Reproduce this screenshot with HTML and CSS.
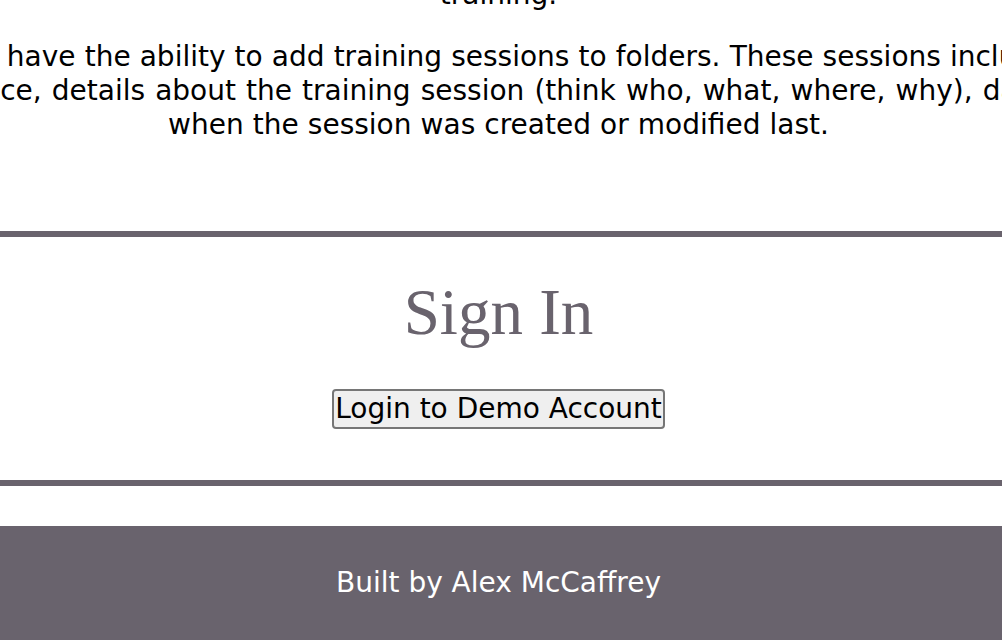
FILE: index.html
```html
<!DOCTYPE html>
<html lang="en">
<head>
<meta charset="utf-8">
<title>Training Log</title>
<link rel="stylesheet" href="styles.css">
</head>
<body>
  <section class="about">
    <p class="about-text">This app was designed to help users keep a log of their<br>training.</p>
    <p class="about-text">Users have the ability to add training sessions to folders. These sessions include a<br><span class="about-wide">distance, details about the training session (think who, what, where, why), date of</span><br>when the session was created or modified last.</p>
  </section>
  <hr class="rule">
  <section class="signin">
    <h2 class="signin-title">Sign In</h2>
    <button class="demo-btn" type="button">Login to Demo Account</button>
  </section>
  <hr class="rule">
  <footer class="footer">Built by Alex McCaffrey</footer>
</body>
</html>
```
FILE: styles.css
```css
html, body {
  margin: 0;
  padding: 0;
}

body {
  font-family: "DejaVu Sans", Verdana, sans-serif;
  font-size: 28px;
  line-height: 34px;
  color: #000;
  background: #fff;
}

.about {
  display: flex;
  flex-direction: column;
  align-items: center;
  gap: 28px;
  margin-top: -56px;
  padding: 0 5px 89px 0;
  overflow-x: clip;
}

.about-text {
  margin: 0;
  width: max-content;
  text-align: center;
  word-spacing: 0.2px;
}

.about-wide {
  word-spacing: 1.2px;
}

.rule {
  margin: 0;
  height: 0;
  border: 0;
  border-top: 6px solid #69636d;
}

.signin {
  display: flex;
  flex-direction: column;
  align-items: center;
  padding: 38px 5px 51px 0;
}

.signin-title {
  margin: 0 0 40px;
  font-family: "Liberation Serif", Georgia, serif;
  font-size: 65px;
  line-height: 74px;
  font-weight: normal;
  color: #69636d;
}

.demo-btn {
  font: inherit;
  line-height: 34px;
  color: #000;
  background: #efefef;
  border: 2px solid #767676;
  border-radius: 4px;
  padding: 1px 1px;
  margin: 0;
}

.footer {
  margin-top: 40px;
  padding: 40px 5px 40px 0;
  background: #69636d;
  color: #fff;
  text-align: center;
}
```
